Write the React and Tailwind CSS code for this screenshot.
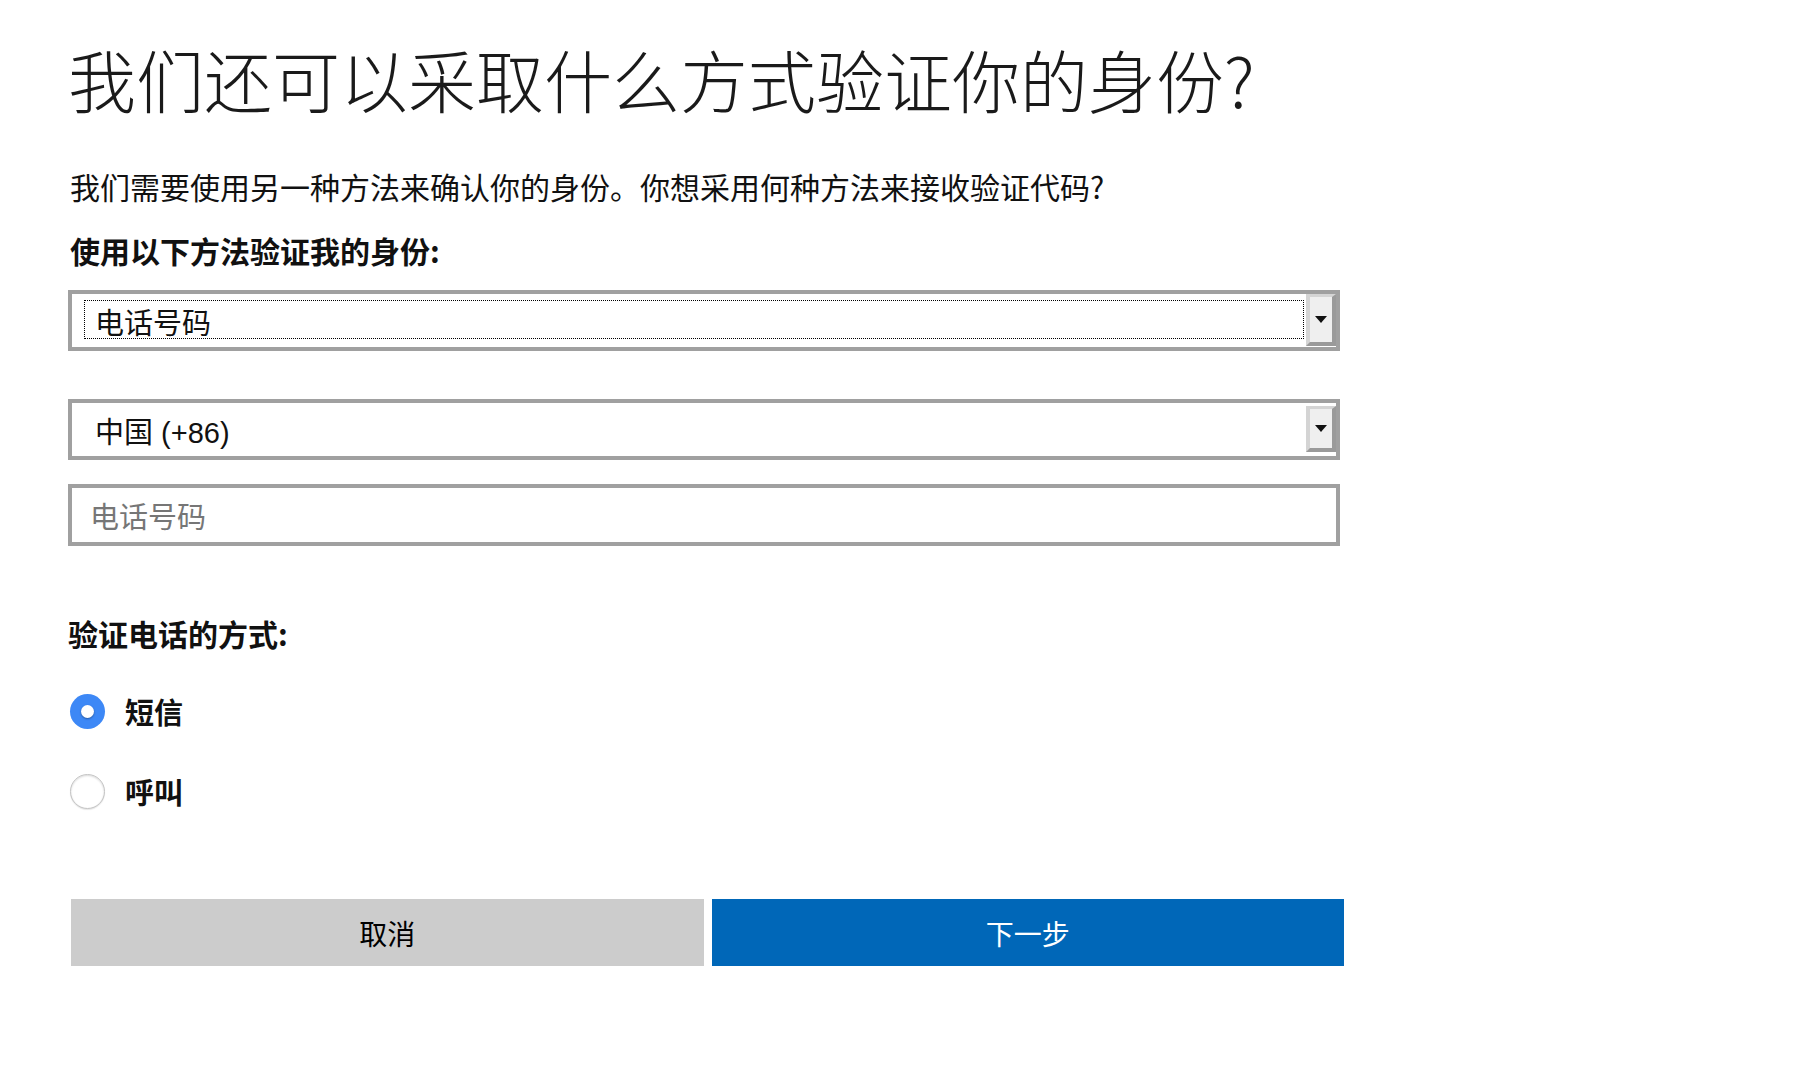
import React from "react";

function DropButton() {
  return (
    <div className="w-[30px] self-stretch mb-[1px] bg-[#efefef] border-l-4 border-t-[3px] border-l-[#d4d4d4] border-t-[#d4d4d4] border-r-4 border-b-4 border-r-[#9a9a9a] border-b-[#9a9a9a] flex items-center justify-center">
      <svg width="12" height="7" viewBox="0 0 12 7">
        <polygon points="0,0 12,0 6,7" fill="#111" />
      </svg>
    </div>
  );
}

export default function App() {
  const cjk = { fontFamily: '"Noto Sans CJK SC", sans-serif' };
  return (
    <div className="min-h-screen bg-white text-[#111]" style={cjk}>
      <div className="pl-[68px] w-[1340px]">
        <h1 className="mt-[45px] h-[68px] leading-none text-[68px] font-light text-[#1a1a1a] whitespace-nowrap pl-0">
          我们还可以采取什么方式验证你的身份?
        </h1>
        <p className="mt-[58px] text-[30px] leading-none whitespace-nowrap pl-[2px]">
          我们需要使用另一种方法来确认你的身份。你想采用何种方法来接收验证代码?
        </p>
        <div className="mt-[34px] text-[30px] leading-none font-bold whitespace-nowrap pl-[2px]">
          使用以下方法验证我的身份:
        </div>

        <div className="mt-[25px] h-[61px] border-4 border-[#a0a0a0] flex bg-white">
          <div className="flex-1 pl-[12px] pt-[6px] pb-[8px] pr-[2px] flex">
            <div className="flex-1 border border-dotted border-black flex items-center pl-[10px] pt-[3px] text-[29px] leading-none">
              电话号码
            </div>
          </div>
          <DropButton />
        </div>

        <div className="mt-[48px] h-[61px] border-4 border-[#a0a0a0] flex bg-white">
          <div
            className="flex-1 flex items-center pl-[23px] pt-[7px] text-[29px] leading-none"
            style={{ fontFamily: '"Liberation Sans", "Noto Sans CJK SC", sans-serif' }}
          >
            中国 (+86)
          </div>
          <div className="flex py-[3px]">
            <DropButton />
          </div>
        </div>

        <div className="mt-[24px] h-[62px] border-4 border-[#a0a0a0] flex items-center pl-[18px] text-[29px] leading-none text-[#767676]">
          电话号码
        </div>

        <div className="mt-[72px] text-[30px] leading-none font-bold whitespace-nowrap">
          验证电话的方式:
        </div>

        <div className="mt-[46px] h-[35px] flex items-center pl-[2px]">
          <div className="w-[35px] h-[35px] rounded-full bg-[#3d88f6] flex items-center justify-center">
            <div className="w-[13px] h-[13px] rounded-full bg-white shadow-[0_1px_2px_rgba(0,0,0,0.35)]" />
          </div>
          <span className="ml-[20px] text-[29px] leading-none font-bold">短信</span>
        </div>

        <div className="mt-[45px] h-[35px] flex items-center pl-[2px]">
          <div className="w-[35px] h-[35px] rounded-full bg-white border border-[#c4c4c4] shadow-[inset_0_1px_2px_rgba(0,0,0,0.15),0_1px_1px_rgba(0,0,0,0.1)]" />
          <span className="ml-[20px] text-[29px] leading-none font-bold">呼叫</span>
        </div>

        <div className="mt-[90px] ml-[3px] w-[1273px] flex gap-[8px]">
          <button className="flex-1 h-[67px] bg-[#cccccc] text-[28px] leading-none text-black flex items-center justify-center">
            取消
          </button>
          <button className="flex-1 h-[67px] bg-[#0067b8] text-[28px] leading-none text-white flex items-center justify-center">
            下一步
          </button>
        </div>
      </div>
    </div>
  );
}
